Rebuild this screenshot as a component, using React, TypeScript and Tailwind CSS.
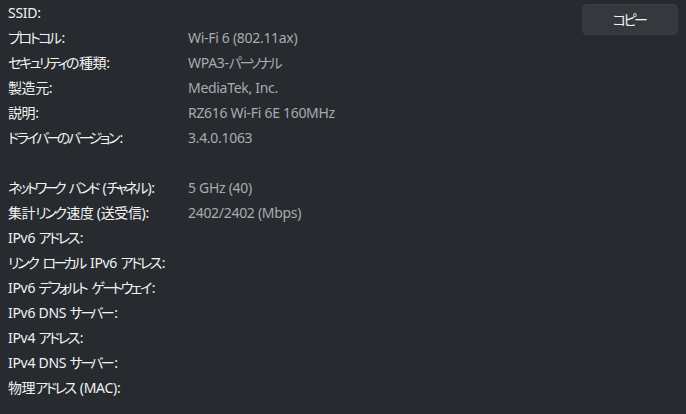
const ROWS: [string, string, boolean?][] = [
  ['SSID:', ''],
  ['プロトコル:', 'Wi-Fi 6 (802.11ax)'],
  ['セキュリティの種類:', 'WPA3-パーソナル'],
  ['製造元:', 'MediaTek, Inc.'],
  ['説明:', 'RZ616 Wi-Fi 6E 160MHz'],
  ['ドライバーのバージョン:', '3.4.0.1063'],
  ['', ''],
  ['ネットワーク バンド (チャネル):', '5 GHz (40)', true],
  ['集計リンク速度 (送受信):', '2402/2402 (Mbps)'],
  ['IPv6 アドレス:', ''],
  ['リンク ローカル IPv6 アドレス:', ''],
  ['IPv6 デフォルト ゲートウェイ:', ''],
  ['IPv6 DNS サーバー:', ''],
  ['IPv4 アドレス:', ''],
  ['IPv4 DNS サーバー:', ''],
  ['物理アドレス (MAC):', ''],
];

const KANA = /^[\u3000-\u30ff]+$/;
const KANJI = /^[\u4e00-\u9fff]+$/;
const RUNS = /([\u3000-\u30ff]+|[\u4e00-\u9fff]+)/;

// Yu Gothic UI kana are much narrower than Noto's, so tighten the kana runs
function Kana({ text, tight }: { text: string; tight?: boolean }) {
  const chars = Array.from(text);
  return (
    <>
      {chars.map((c, i) => {
        let cls = tight ? 'tracking-[-2.8px]' : 'tracking-[-2.4px]';
        if (c === 'ー') cls = tight ? 'tracking-[-4.4px]' : 'tracking-[-4px]';
        if (i === chars.length - 1) cls = tight ? 'tracking-[-1px]' : 'tracking-[-0.6px]';
        return (
          <span key={i} className={cls}>
            {c}
          </span>
        );
      })}
    </>
  );
}

function Narrow({ text, tight }: { text: string; tight?: boolean }) {
  return (
    <>
      {text.split(RUNS).map((part, i) => {
        if (KANA.test(part)) return <Kana key={i} text={part} tight={tight} />;
        if (KANJI.test(part))
          return (
            <span key={i} className="tracking-[-0.4px]">
              {part}
            </span>
          );
        return (
          <span key={i} className={tight ? 'tracking-[-0.5px]' : ''}>
            {part}
          </span>
        );
      })}
    </>
  );
}

export default function App() {
  return (
    <div
      className="w-[686px] h-[414px] bg-[#272a2f] flex overflow-hidden text-[14px] tracking-[-0.3px] [font-feature-settings:'palt']"
      style={{ fontFamily: '"Noto Sans", "Noto Sans CJK JP", sans-serif' }}
    >
      <div className="flex flex-col pl-2 flex-1">
        {ROWS.map(([label, value, tight], i) => (
          <div key={i} className="flex h-[25px] items-center">
            <div className="w-[180px] text-[#f2f2f2] whitespace-nowrap">
              <Narrow text={label} tight={tight} />
            </div>
            <div className="text-[#a9abaf] whitespace-nowrap">
              <Narrow text={value} />
            </div>
          </div>
        ))}
      </div>
      <div className="pt-[4px] pr-2">
        <button className="w-[96px] h-[31px] rounded-[5px] bg-[#35383d] border border-[#3c3f44] text-[#f2f2f2] text-[14px]">
          <Narrow text="コピー" />
        </button>
      </div>
    </div>
  );
}
